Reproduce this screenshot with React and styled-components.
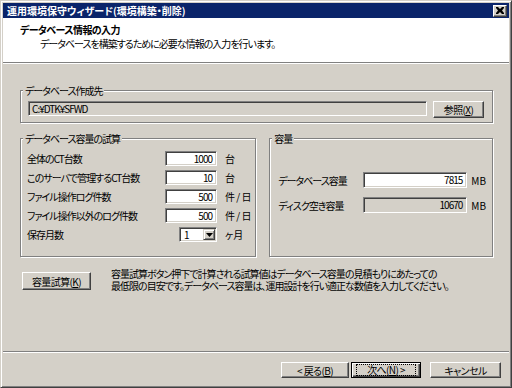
import styled, { createGlobalStyle } from "styled-components";

const GlobalStyle = createGlobalStyle`
  html, body {
    margin: 0;
    padding: 0;
    background: #d4d0c8;
  }
  body {
    font-family: "Noto Sans CJK JP", "Liberation Sans", sans-serif;
    font-size: 10px;
    letter-spacing: -1px;
    font-feature-settings: "palt" 1;
    color: #000;
  }
  u {
    text-decoration: underline;
    text-underline-offset: 1px;
  }
`;

const Window = styled.div`
  width: 512px;
  height: 388px;
  box-sizing: border-box;
  display: flex;
  flex-direction: column;
  background: #d4d0c8;
  border: 1px solid;
  border-color: #d4d0c8 #404040 #404040 #d4d0c8;
  box-shadow: inset 1px 1px #fff, inset -1px -1px #808080;
  padding: 2px;
`;

const TitleBar = styled.div`
  height: 15px;
  flex: none;
  display: flex;
  align-items: center;
  background: #0a246a;
  color: #fff;
  font-weight: bold;
  font-size: 10px;
  letter-spacing: 0;
  padding-left: 4px;
  padding-right: 2px;

  span {
    flex: 1;
    line-height: 15px;
  }
`;

const CloseBtn = styled.div`
  width: 14px;
  height: 12px;
  box-sizing: border-box;
  background: #d4d0c8;
  border: 1px solid;
  border-color: #fff #404040 #404040 #fff;
  box-shadow: inset -1px -1px #808080;
  display: flex;
  align-items: center;
  justify-content: center;
`;

const Header = styled.div`
  height: 45px;
  flex: none;
  box-sizing: border-box;
  background: #fff;
  border-bottom: 1px solid #808080;
  padding: 5px 0 0 17px;

  h1 {
    margin: 0;
    height: 13px;
    font-size: 10px;
    font-weight: bold;
    letter-spacing: -0.6px;
    line-height: 13px;
  }
  p {
    margin: 1px 0 0 20px;
    height: 13px;
    line-height: 13px;
  }
`;

const Main = styled.div`
  height: 288px;
  flex: none;
  box-sizing: border-box;
  box-shadow: inset 0 1px #fff;
  padding: 27px 16px 0 17px;
  display: flex;
  flex-direction: column;
`;

const Group = styled.div`
  box-sizing: border-box;
  height: ${(p) => p.$h}px;
  width: ${(p) => (p.$w ? `${p.$w}px` : "auto")};
  border: 1px solid #808080;
  box-shadow: 1px 1px 0 #fff, inset 1px 1px 0 #fff;
  display: flex;
  flex-direction: column;
  padding: 0 ${(p) => p.$pr ?? 8}px 0 ${(p) => p.$pl ?? 7}px;
`;

const GroupLabel = styled.div`
  align-self: flex-start;
  margin: -7px 0 0 ${(p) => p.$ml ?? -5}px;
  padding: 0 2px;
  line-height: 13px;
  background: #d4d0c8;
`;

const PathRow = styled.div`
  display: flex;
  align-items: flex-start;
  gap: 6px;
  margin-top: 4px;
`;

const Field = styled.div`
  box-sizing: border-box;
  height: ${(p) => p.$h || 15}px;
  width: ${(p) => (p.$w ? `${p.$w}px` : "auto")};
  flex: ${(p) => (p.$w ? "none" : "1")};
  background: ${(p) => (p.$disabled ? "#d4d0c8" : "#fff")};
  border: 1px solid;
  border-color: #808080 #fff #fff #808080;
  box-shadow: inset 1px 1px #404040, inset -1px -1px #d4d0c8;
  padding: 0 ${(p) => (p.$left ? 3 : 4)}px;
  line-height: ${(p) => (p.$h || 15) - 2}px;
  text-align: ${(p) => (p.$left ? "left" : "right")};
  white-space: nowrap;
`;

const Button = styled.div`
  box-sizing: border-box;
  width: ${(p) => p.$w}px;
  height: ${(p) => p.$h || 17}px;
  flex: none;
  display: flex;
  align-items: center;
  justify-content: center;
  background: #d4d0c8;
  border: 1px solid;
  border-color: ${(p) => (p.$default ? "#000" : "#fff #404040 #404040 #fff")};
  box-shadow: ${(p) =>
    p.$default
      ? "inset 1px 1px #fff, inset -1px -1px #404040, inset -2px -2px #808080"
      : "inset -1px -1px #808080"};
  margin-left: ${(p) => p.$gap || 0}px;
  letter-spacing: -0.6px;
  line-height: 13px;
  white-space: pre;
`;

const Focus = styled.span`
  outline: 1px dotted #000;
  padding: 0 10px;
  line-height: 10px;
`;

const Columns = styled.div`
  display: flex;
  gap: 13px;
  margin-top: 15px;
`;

const CalcGrid = styled.div`
  display: grid;
  grid-template-columns: 130px 52px auto;
  grid-auto-rows: 15px;
  row-gap: 4px;
  column-gap: 8px;
  align-items: center;
  margin-top: 6px;
  white-space: nowrap;
`;

const Unit = styled.span`
  letter-spacing: 0;
  word-spacing: -1px;
`;

const SizeGrid = styled.div`
  display: grid;
  grid-template-columns: 81px 104px auto;
  grid-auto-rows: 16px;
  row-gap: 9px;
  column-gap: 4px;
  align-items: center;
  margin-top: 27px;
  white-space: nowrap;
`;

const Combo = styled.div`
  justify-self: end;
  width: 38px;
  height: 15px;
  box-sizing: border-box;
  display: flex;
  align-items: stretch;
  background: #fff;
  border: 1px solid;
  border-color: #808080 #fff #fff #808080;
  box-shadow: inset 1px 1px #404040, inset -1px -1px #d4d0c8;
  padding: 1px;

  span {
    flex: 1;
    padding-left: 3px;
    line-height: 11px;
  }
`;

const DropBtn = styled.div`
  width: 12px;
  box-sizing: border-box;
  background: #d4d0c8;
  border: 1px solid;
  border-color: #d4d0c8 #404040 #404040 #d4d0c8;
  box-shadow: inset 1px 1px #fff, inset -1px -1px #808080;
  display: flex;
  align-items: center;
  justify-content: center;
`;

const CalcRow = styled.div`
  display: flex;
  align-items: flex-start;
  gap: 20px;
  margin-top: 15px;
  margin-left: 2px;

  p {
    margin: -4px 0 0;
    white-space: nowrap;
  }
  p span {
    display: block;
    height: 12px;
    line-height: 12px;
  }
`;

const Footer = styled.div`
  flex: 1;
  border-top: 1px solid #808080;
  box-shadow: inset 0 1px #fff;
  display: flex;
  justify-content: flex-end;
  align-items: flex-start;
  padding: 10px 8px 0 0;
  gap: 2px;
`;

const rows = [
  ["全体のCT台数", "1000", "台"],
  ["このサーバで管理するCT台数", "10", "台"],
  ["ファイル操作ログ件数", "500", "件 / 日"],
  ["ファイル操作以外のログ件数", "500", "件 / 日"],
];

export default function App() {
  return (
    <>
      <GlobalStyle />
      <Window>
        <TitleBar>
          <span>運用環境保守ウィザード(環境構築・削除)</span>
          <CloseBtn>
            <svg width="8" height="7" viewBox="0 0 8 7">
              <path d="M0 0h2l2 2 2-2h2v1L6 3.5 8 6v1H6L4 5 2 7H0V6l2-2.5L0 1z" fill="#000" />
            </svg>
          </CloseBtn>
        </TitleBar>

        <Header>
          <h1>データベース情報の入力</h1>
          <p>データベースを構築するために必要な情報の入力を行います。</p>
        </Header>

        <Main>
          <Group $h={33} $pl={7} $pr={8}>
            <GroupLabel $ml={-5}>データベース作成先</GroupLabel>
            <PathRow>
              <Field $disabled $left>C:¥DTK¥SFWD</Field>
              <Button $w={51}>
                参照(<u>X</u>)
              </Button>
            </PathRow>
          </Group>

          <Columns>
            <Group $h={119} $w={238} $pl={6} $pr={2}>
              <GroupLabel $ml={-4}>データベース容量の試算</GroupLabel>
              <CalcGrid>
                {rows.map(([label, value, unit]) => (
                  <Row key={label} label={label} value={value} unit={unit} />
                ))}
                <span>保存月数</span>
                <Combo>
                  <span>1</span>
                  <DropBtn>
                    <svg width="7" height="4" viewBox="0 0 7 4">
                      <path d="M0 0h7L3.5 4z" fill="#000" />
                    </svg>
                  </DropBtn>
                </Combo>
                <Unit>ヶ月</Unit>
              </CalcGrid>
            </Group>

            <Group $h={119} $w={224} $pl={8} $pr={6}>
              <GroupLabel $ml={-6}>容量</GroupLabel>
              <SizeGrid>
                <span>データベース容量</span>
                <Field $h={16} $w={104}>7815</Field>
                <Unit>MB</Unit>
                <span>ディスク空き容量</span>
                <Field $h={16} $w={104} $disabled>10670</Field>
                <Unit>MB</Unit>
              </SizeGrid>
            </Group>
          </Columns>

          <CalcRow>
            <Button $w={69} $h={18}>
              容量試算(<u>K</u>)
            </Button>
            <p>
              <span>容量試算ボタン押下で計算される試算値はデータベース容量の見積もりにあたっての</span>
              <span>最低限の目安です。データベース容量は、運用設計を行い適正な数値を入力してください。</span>
            </p>
          </CalcRow>
        </Main>

        <Footer>
          <Button $w={68} $h={16}>
            {"< 戻る("}<u>B</u>)
          </Button>
          <Button $w={70} $h={16} $default>
            <Focus>
              次へ(<u>N</u>){" >"}
            </Focus>
          </Button>
          <Button $w={71} $h={16} $gap={7}>
            キャンセル
          </Button>
        </Footer>
      </Window>
    </>
  );
}

function Row({ label, value, unit }) {
  return (
    <>
      <span>{label}</span>
      <Field>{value}</Field>
      <Unit>{unit}</Unit>
    </>
  );
}
